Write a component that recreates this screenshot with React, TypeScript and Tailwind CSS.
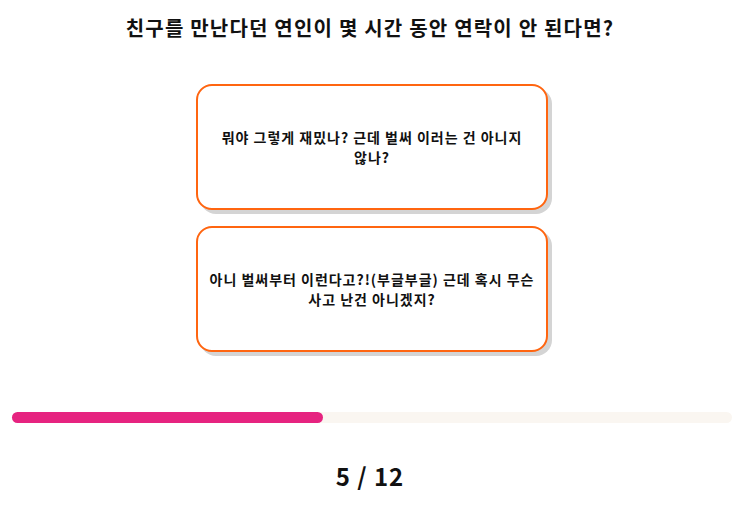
const answers = [
  '뭐야 그렇게 재밌나? 근데 벌써 이러는 건 아니지 않나?',
  '아니 벌써부터 이런다고?!(부글부글) 근데 혹시 무슨 사고 난건 아니겠지?',
];

export default function App() {
  const current = 5;
  const total = 12;

  return (
    <div className="min-h-screen bg-white font-['Noto_Sans_CJK_KR','Noto_Sans',sans-serif] text-[#111]">
      <h1 className="pt-[13px] text-center text-[20px] font-bold leading-[30px] tracking-[0.06em]">
        친구를 만난다던 연인이 몇 시간 동안 연락이 안 된다면?
      </h1>

      <div className="mt-[41px] flex flex-col items-center gap-4 pl-1">
        {answers.map((text) => (
          <button
            key={text}
            type="button"
            className="flex h-[126px] w-[352px] items-center justify-center break-keep rounded-[16px] border-[2.5px] border-[#ff6510] bg-white px-2.5 text-center text-[14px] font-bold leading-[20px] tracking-[0.07em] shadow-[4px_4px_0_#d4d4d4]"
          >
            {text}
          </button>
        ))}
      </div>

      <div className="mt-[60px] pl-3 pr-2">
        <div className="h-[11px] w-full rounded-full bg-[#faf6f1]">
          <div className="h-full w-[43.2%] rounded-full bg-[#e62380]" />
        </div>
      </div>

      <p className="mt-[37px] text-center text-[24px] font-bold leading-[32px] tracking-[0.04em]">
        {current} / {total}
      </p>
    </div>
  );
}
